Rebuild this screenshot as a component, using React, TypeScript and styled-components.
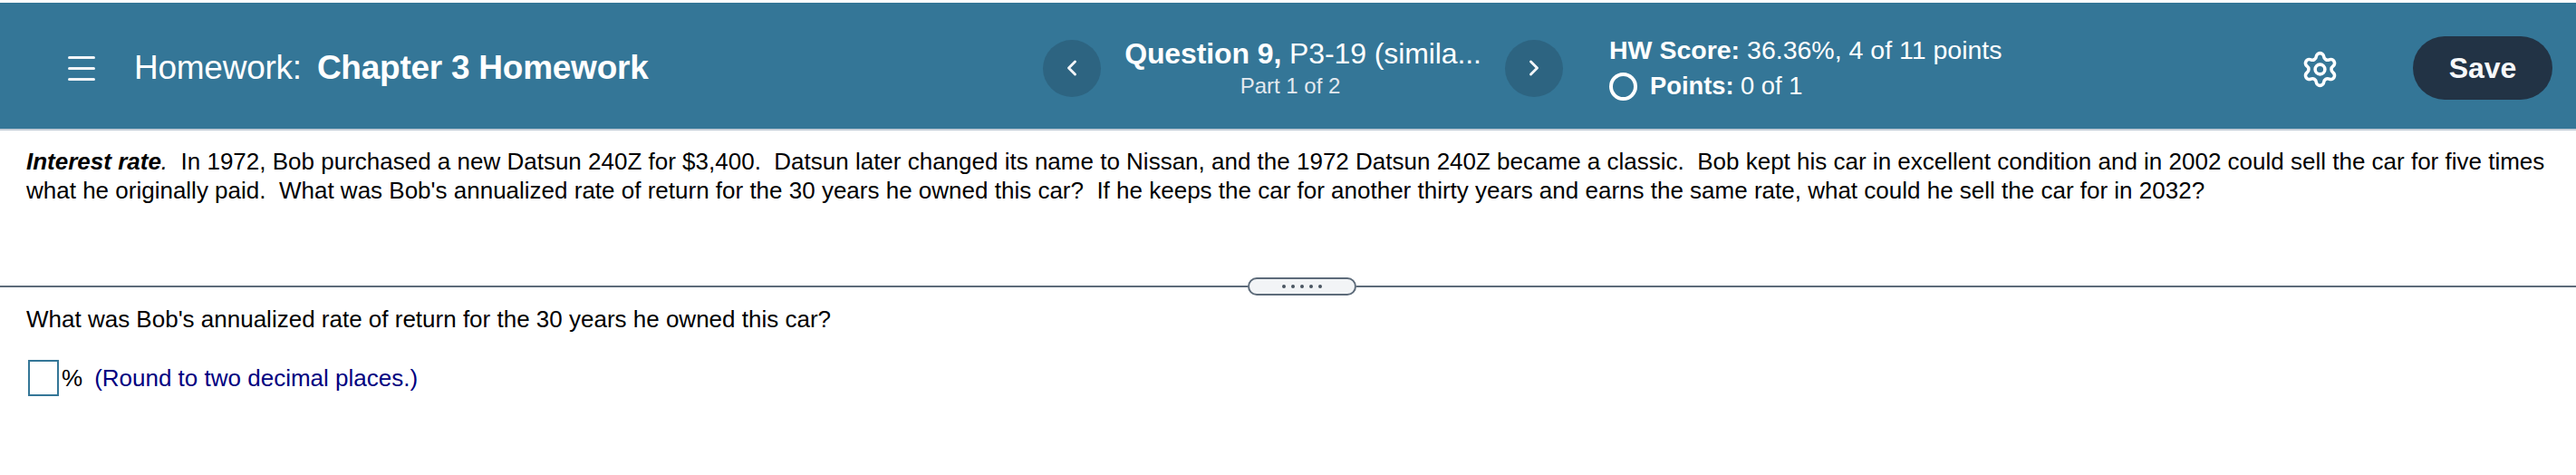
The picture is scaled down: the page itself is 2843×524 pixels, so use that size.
import styled, { createGlobalStyle } from "styled-components";
import { ChevronLeft, ChevronRight, Settings } from "lucide-react";

const GlobalStyle = createGlobalStyle`
  html, body {
    margin: 0;
    padding: 0;
    background: #fff;
    font-family: "Liberation Sans", Arial, sans-serif;
    color: #000;
  }
`;

const Page = styled.div`
  width: 2843px;
  height: 524px;
  padding-top: 3px;
  box-sizing: border-box;
  overflow: hidden;
`;

const Header = styled.header`
  height: 134px;
  padding-top: 5px;
  background: #347697;
  border-bottom: 2px solid #c3ccd6;
  display: flex;
  align-items: center;
  color: #fff;
`;

const Menu = styled.div`
  width: 30px;
  height: 27px;
  margin-left: 75px;
  display: flex;
  flex-direction: column;
  justify-content: space-between;
  span {
    display: block;
    height: 3px;
    border-radius: 2px;
    background: #f2f5f8;
  }
`;

const Title = styled.div`
  margin-left: 43px;
  width: 1003px;
  font-size: 37px;
  letter-spacing: -0.25px;
  b {
    margin-left: 7px;
  }
`;

const RoundButton = styled.div`
  width: 64px;
  height: 63px;
  border-radius: 50%;
  background: #2d6481;
  display: flex;
  align-items: center;
  justify-content: center;
  flex: none;
`;

const QuestionBlock = styled.div`
  width: 446px;
  text-align: center;
`;

const QuestionName = styled.div`
  font-size: 32px;
  line-height: 40px;
  letter-spacing: -0.1px;
  white-space: nowrap;
`;

const PartLabel = styled.div`
  font-size: 24px;
  line-height: 32px;
  color: #e3e9ef;
  padding-right: 28px;
`;

const Score = styled.div`
  margin-left: 51px;
  width: 767px;
  font-size: 28.5px;
  line-height: 40px;
`;

const PointsRow = styled.div`
  display: flex;
  align-items: center;
  gap: 14px;
  font-size: 27.3px;
`;

const PointsCircle = styled.span`
  flex: none;
  width: 31px;
  height: 31px;
  box-sizing: border-box;
  border: 4px solid #fff;
  border-radius: 50%;
`;

const Gear = styled.div`
  width: 120px;
  flex: none;
  display: flex;
  svg {
    margin: 2px 0 0 -4px;
  }
`;

const SaveButton = styled.div`
  width: 154px;
  height: 70px;
  border-radius: 35px;
  background: #223345;
  font-size: 32px;
  font-weight: 700;
  color: #f7f8fa;
  display: flex;
  align-items: center;
  justify-content: center;
`;

const Prompt = styled.p`
  margin: 0;
  padding: 18px 29px 0;
  font-size: 26px;
  line-height: 32px;
  height: 162px;
  box-sizing: border-box;
`;

const Divider = styled.div`
  height: 20px;
  display: flex;
  align-items: center;
  &::before,
  &::after {
    content: "";
    height: 2px;
    background: #5d6b7a;
  }
  &::before {
    width: 1377px;
  }
  &::after {
    flex: 1;
  }
`;

const Handle = styled.div`
  width: 120px;
  height: 20px;
  box-sizing: border-box;
  border: 2px solid #5d6b7a;
  border-radius: 10px;
  background: #f2f4f6;
  display: flex;
  align-items: center;
  justify-content: center;
  gap: 6px;
  span {
    width: 4px;
    height: 4px;
    border-radius: 50%;
    background: #4a5561;
  }
`;

const Answer = styled.div`
  padding: 10px 29px 0;
`;

const AnswerQuestion = styled.div`
  font-size: 26px;
  line-height: 32px;
`;

const AnswerRow = styled.div`
  display: flex;
  align-items: center;
  margin-top: 29px;
  margin-left: 2px;
  font-size: 26px;
`;

const AnswerBox = styled.div`
  width: 34px;
  height: 40px;
  box-sizing: border-box;
  border: 2px solid #347697;
  margin-right: 3px;
`;

const Hint = styled.span`
  color: #000080;
  margin-left: 13px;
`;

export default function App() {
  return (
    <Page>
      <GlobalStyle />
      <Header>
        <Menu>
          <span />
          <span />
          <span />
        </Menu>
        <Title>
          Homework: <b>Chapter 3 Homework</b>
        </Title>
        <RoundButton>
          <ChevronLeft size={28} strokeWidth={2.5} color="#f2f5f8" />
        </RoundButton>
        <QuestionBlock>
          <QuestionName>
            <b>Question 9,</b> P3-19 (simila...
          </QuestionName>
          <PartLabel>Part 1 of 2</PartLabel>
        </QuestionBlock>
        <RoundButton>
          <ChevronRight size={28} strokeWidth={2.5} color="#f2f5f8" />
        </RoundButton>
        <Score>
          <div>
            <b>HW Score:</b> 36.36%, 4 of 11 points
          </div>
          <PointsRow>
            <PointsCircle />
            <span>
              <b>Points:</b> 0 of 1
            </span>
          </PointsRow>
        </Score>
        <Gear>
          <Settings size={43} strokeWidth={2} color="#fff" />
        </Gear>
        <SaveButton>Save</SaveButton>
      </Header>
      <Prompt>
        <b>
          <i>Interest rate</i>
        </b>
        <i>.</i>&nbsp; In 1972, Bob purchased a new Datsun 240Z for $3,400.&nbsp; Datsun later changed its name to Nissan,
        and the 1972 Datsun 240Z became a classic.&nbsp; Bob kept his car in excellent condition and in 2002 could sell
        the car for five times what he originally paid.&nbsp; What was Bob's annualized rate of return for the 30 years
        he owned this car?&nbsp; If he keeps the car for another thirty years and earns the same rate, what could he
        sell the car for in 2032?
      </Prompt>
      <Divider>
        <Handle>
          <span />
          <span />
          <span />
          <span />
          <span />
        </Handle>
      </Divider>
      <Answer>
        <AnswerQuestion>What was Bob's annualized rate of return for the 30 years he owned this car?</AnswerQuestion>
        <AnswerRow>
          <AnswerBox />
          %<Hint>(Round to two decimal places.)</Hint>
        </AnswerRow>
      </Answer>
    </Page>
  );
}
